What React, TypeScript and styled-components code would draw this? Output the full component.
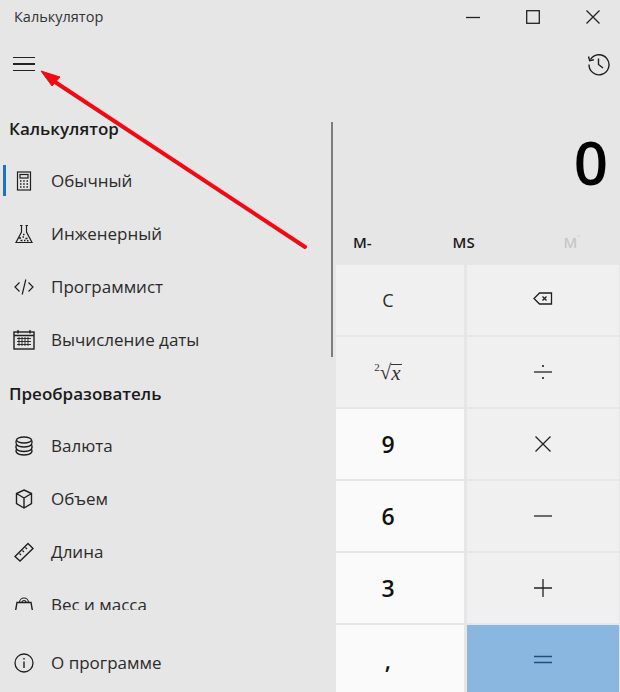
import React from 'react'
import styled, { createGlobalStyle } from 'styled-components'

const GlobalStyle = createGlobalStyle`
  html, body {
    margin: 0;
    padding: 0;
    background: #e6e6e6;
  }
  * {
    box-sizing: border-box;
  }
`

const Icon: React.FC<{ size?: number; box?: number; children: React.ReactNode }> = ({ size = 20, box = 20, children }) => (
  <svg width={size} height={size} viewBox={`0 0 ${box} ${box}`} fill="none" stroke="#1f1f1f" strokeWidth="1.2">
    {children}
  </svg>
)

const CalculatorIcon = () => (
  <Icon>
    <rect x="3.5" y="1" width="13" height="18" />
    <rect x="6" y="3.5" width="8" height="3.5" />
    <path d="M6 10h1.5M9.2 10h1.5M12.5 10h1.5M6 13h1.5M9.2 13h1.5M12.5 13h1.5M6 16h1.5M9.2 16h1.5M12.5 16h1.5" strokeWidth="1.4" />
  </Icon>
)

const FlaskIcon = () => (
  <Icon>
    <path d="M7.5 1v7L2 18.5h16L12.5 8V1M6 1.5h2.5M11.5 1.5H14" />
    <path d="M5 14h2M8.5 13h1.5M11.5 14.5h2M6.5 16.5h2M10 16.5h1.5M13 16.8h1.5M9 10.5h1.5" strokeWidth="1.5" />
  </Icon>
)

const CodeIcon = () => (
  <Icon>
    <path d="M5.5 5.5L1 10l4.5 4.5M14.5 5.5L19 10l-4.5 4.5M11.8 2.5L8.2 17.5" />
  </Icon>
)

const CalendarIcon = () => (
  <Icon box={22} size={22}>
    <rect x="1" y="3" width="20" height="17" strokeWidth="1.4" />
    <path d="M1 6.5h20M5 1v3.5M17 1v3.5" strokeWidth="1.4" />
    <path d="M4 9.5h14M4 12.5h14M4 15.5h14M6 8v9M9 8v9M12 8v9M15 8v9" strokeWidth="0.9" />
  </Icon>
)

const CoinsIcon = () => (
  <Icon>
    <ellipse cx="10" cy="4" rx="7.5" ry="3" strokeWidth="1.4" />
    <path d="M2.5 4c-.8 1.5-.8 3 0 4.5 1.4 1.7 3.9 2.5 7.5 2.5s6.100-.8 7.500-2.500c.8-1.500.8-3 0-4.500M2.500 8.500c-.8 1.500-.8 3 0 4.500 1.400 1.700 3.900 2.500 7.500 2.500s6.100-.8 7.500-2.500c.8-1.500.8-3 0-4.500M2.500 13c-.8 1.500-.8 2.500 0 3.500 1.400 1.700 3.900 2.500 7.500 2.500s6.100-.8 7.500-2.500c.8-1 .8-2 0-3.500" strokeWidth="1.4" />
  </Icon>
)

const CubeIcon = () => (
  <Icon>
    <path d="M10 1l7.5 3.500v10L10 19l-7.500-4.500v-10zM2.500 4.500L10 9l7.500-4.500M10 9v10" strokeWidth="1.4" />
  </Icon>
)

const RulerIcon = () => (
  <Icon>
    <path d="M14 1.500l5 5L6 19 1 14.500z" strokeWidth="1.4" />
    <path d="M5.500 11.500l1.500 1.500M8.500 8.500L10 10M11.500 5.500l1.500 1.500" />
  </Icon>
)

const ScaleIcon = () => (
  <Icon>
    <path d="M1 19l2-11.500h14L19 19" strokeWidth="1.4" />
    <path d="M5.500 7.500a4.500 4.500 0 0 1 9 0M8 7.500a2 2 0 0 1 4 0" strokeWidth="1.2" />
  </Icon>
)

const InfoIcon = () => (
  <Icon>
    <circle cx="10" cy="10" r="9" strokeWidth="1.3" />
    <path d="M10 8.500V15" strokeWidth="1.4" />
    <circle cx="10" cy="5.800" r="0.5" strokeWidth="1" />
  </Icon>
)

const HistoryIcon = () => (
  <Icon box={24} size={24}>
    <path d="M4.500 7.500A10 10 0 1 1 3 12.500" strokeWidth="1.4" />
    <path d="M2.500 4.500l1.200 4.200 4.200-1" strokeWidth="1.4" />
    <path d="M12.500 6.500v6l4.500 3.500" strokeWidth="1.4" />
  </Icon>
)

const BackspaceIcon = () => (
  <Icon box={20} size={20}>
    <path d="M18.500 3H6.500L1 8.500l5.500 5.500h12z" strokeWidth="1.3" />
    <path d="M9.500 6.500l4 4M13.500 6.500l-4 4" strokeWidth="1.3" />
  </Icon>
)

const SymbolIcon: React.FC<{ d: string; dots?: boolean; color?: string }> = ({ d, dots, color = '#222' }) => (
  <svg width="20" height="20" viewBox="0 0 20 20" fill="none" stroke={color} strokeWidth="1.3">
    <path d={d} />
    {dots && (
      <>
        <circle cx="10" cy="4" r="1.1" fill={color} stroke="none" />
        <circle cx="10" cy="16" r="1.1" fill={color} stroke="none" />
      </>
    )}
  </svg>
)

const Window = styled.div`
  position: relative;
  width: 620px;
  height: 692px;
  overflow: hidden;
  display: flex;
  flex-direction: column;
  background: #e6e6e6;
  color: #1a1a1a;
  font-family: "Open Sans", "Noto Sans", sans-serif;
`

const TitleBar = styled.div`
  height: 34px;
  flex: none;
  display: flex;
  align-items: center;
  justify-content: space-between;
  padding: 0 20px 0 14px;
`

const TitleText = styled.span`
  font-size: 14.5px;
  color: #333;
  margin-top: -2px;
`

const WindowControls = styled.div`
  display: flex;
  gap: 46px;
  align-items: center;
`

const TopBar = styled.div`
  height: 60px;
  flex: none;
  display: flex;
  align-items: center;
  justify-content: space-between;
  padding: 0 10px 0 13px;
`

const Hamburger = styled.div`
  width: 22px;
  height: 14px;
  border-top: 1.5px solid #222;
  border-bottom: 1.5px solid #222;
  display: flex;
  align-items: center;

  &::before {
    content: '';
    display: block;
    width: 100%;
    height: 1.5px;
    background: #222;
  }
`

const Body = styled.div`
  flex: 1;
  min-height: 0;
  display: flex;
`

const Sidebar = styled.nav`
  position: relative;
  width: 336px;
  flex: none;
  display: flex;
  flex-direction: column;
`

const NavList = styled.div`
  height: 516px;
  flex: none;
  padding-top: 7px;
  overflow: hidden;
`

const Scrollbar = styled.div`
  position: absolute;
  top: 28px;
  right: 3px;
  width: 2px;
  height: 235px;
  background: #7d7d7d;
`

const SectionTitle = styled.div`
  height: 53px;
  display: flex;
  align-items: center;
  padding: 1px 0 0 9px;
  font-size: 17px;
  font-weight: 600;
  color: #1a1a1a;
`

const NavItem = styled.div<{ $active?: boolean }>`
  position: relative;
  height: 53px;
  display: flex;
  align-items: center;
  padding-left: 13px;
  font-size: 17px;
  color: #2b2b2b;

  &::before {
    content: '';
    display: ${p => (p.$active ? 'block' : 'none')};
    position: absolute;
    left: 3px;
    top: 11px;
    width: 3px;
    height: 31px;
    background: #1a73c8;
  }
`

const NavIcon = styled.span`
  width: 22px;
  height: 22px;
  flex: none;
  margin-right: 16px;
  display: flex;
  align-items: center;
  justify-content: center;
`

const Footer = styled.div`
  flex: 1;
  display: flex;
  flex-direction: column;
  justify-content: flex-end;
  padding-bottom: 3px;
`

const Calculator = styled.section`
  flex: 1;
  min-width: 0;
  display: flex;
  flex-direction: column;
`

const Display = styled.div`
  height: 122px;
  flex: none;
  display: flex;
  align-items: center;
  justify-content: flex-end;
  padding: 14px 12px 0 0;
  font-size: 60px;
  font-weight: 600;
  color: #000;
  line-height: 1;
`

const MemoryRow = styled.div`
  height: 49px;
  flex: none;
  display: flex;
  align-items: center;
  justify-content: space-between;
  padding: 7px 40px 4px 17px;
`

const MemoryButton = styled.span<{ $disabled?: boolean }>`
  font-size: 15px;
  font-weight: 600;
  color: ${p => (p.$disabled ? '#c8c8c8' : '#1a1a1a')};

  &:nth-child(2) {
    margin-right: 8px;
  }

  sup {
    font-size: 9px;
    line-height: 0;
  }
`

const Keypad = styled.div`
  display: grid;
  grid-template-columns: 128px 151.5px;
  grid-auto-rows: 70px;
  column-gap: 3px;
  row-gap: 2px;
`

const Key = styled.div<{ $variant?: 'digit' | 'op' | 'equals' }>`
  display: flex;
  align-items: center;
  justify-content: center;
  background: ${p => (p.$variant === 'digit' ? '#fafafa' : p.$variant === 'equals' ? '#89b7e0' : '#f0f0f0')};
  color: #111;

  &:nth-child(odd) {
    padding-right: 24px;
  }
`

const DigitLabel = styled.span`
  font-size: 23px;
  font-weight: 600;
`

const ClearLabel = styled.span`
  font-size: 18px;
  color: #2a2a2a;
`

const RootLabel = styled.span`
  display: flex;
  align-items: flex-end;
  font-family: "Liberation Serif", serif;
  font-size: 21px;
  line-height: 20px;
  color: #333;

  sup {
    font-size: 11px;
    line-height: 11px;
    align-self: flex-start;
  }

  i {
    display: block;
    line-height: 17px;
    border-top: 1px solid #333;
    padding-right: 1px;
  }
`

const Arrow = styled.svg`
  position: absolute;
  left: 0;
  top: 0;
  pointer-events: none;
`

const topNav = [
  { label: 'Обычный', icon: <CalculatorIcon />, active: true },
  { label: 'Инженерный', icon: <FlaskIcon /> },
  { label: 'Программист', icon: <CodeIcon /> },
  { label: 'Вычисление даты', icon: <CalendarIcon /> },
]

const converters = [
  { label: 'Валюта', icon: <CoinsIcon /> },
  { label: 'Объем', icon: <CubeIcon /> },
  { label: 'Длина', icon: <RulerIcon /> },
  { label: 'Вес и масса', icon: <ScaleIcon /> },
]

const App: React.FC = () => {
  return (
    <Window>
      <GlobalStyle />
      <TitleBar>
        <TitleText>Калькулятор</TitleText>
        <WindowControls>
          <svg width="14" height="14" viewBox="0 0 14 14" fill="none" stroke="#222" strokeWidth="1.3">
            <path d="M0 7.500h14" />
          </svg>
          <svg width="14" height="14" viewBox="0 0 14 14" fill="none" stroke="#222" strokeWidth="1.3">
            <rect x="0.7" y="0.7" width="12.6" height="12.6" />
          </svg>
          <svg width="14" height="14" viewBox="0 0 14 14" fill="none" stroke="#222" strokeWidth="1.3">
            <path d="M0.500 0.500l13 13M13.500 0.500l-13 13" />
          </svg>
        </WindowControls>
      </TitleBar>
      <TopBar>
        <Hamburger />
        <HistoryIcon />
      </TopBar>
      <Body>
        <Sidebar>
          <NavList>
            <SectionTitle>Калькулятор</SectionTitle>
            {topNav.map(item => (
              <NavItem key={item.label} $active={item.active}>
                <NavIcon>{item.icon}</NavIcon>
                {item.label}
              </NavItem>
            ))}
            <SectionTitle>Преобразователь</SectionTitle>
            {converters.map(item => (
              <NavItem key={item.label}>
                <NavIcon>{item.icon}</NavIcon>
                {item.label}
              </NavItem>
            ))}
          </NavList>
          <Scrollbar />
          <Footer>
            <NavItem>
              <NavIcon><InfoIcon /></NavIcon>
              О программе
            </NavItem>
          </Footer>
        </Sidebar>
        <Calculator>
          <Display>0</Display>
          <MemoryRow>
            <MemoryButton>M-</MemoryButton>
            <MemoryButton>MS</MemoryButton>
            <MemoryButton $disabled>M<sup>˅</sup></MemoryButton>
          </MemoryRow>
          <Keypad>
            <Key><ClearLabel>C</ClearLabel></Key>
            <Key><BackspaceIcon /></Key>
            <Key><RootLabel><sup>2</sup>√<i>x</i></RootLabel></Key>
            <Key><SymbolIcon d="M1 10h18" dots /></Key>
            <Key $variant="digit"><DigitLabel>9</DigitLabel></Key>
            <Key><SymbolIcon d="M2.500 2.500l15 15M17.500 2.500l-15 15" /></Key>
            <Key $variant="digit"><DigitLabel>6</DigitLabel></Key>
            <Key><SymbolIcon d="M1 10h18" /></Key>
            <Key $variant="digit"><DigitLabel>3</DigitLabel></Key>
            <Key><SymbolIcon d="M1 10h18M10 1v18" /></Key>
            <Key $variant="digit"><DigitLabel>,</DigitLabel></Key>
            <Key $variant="equals"><SymbolIcon d="M1 6.500h18M1 12.500h18" color="#1d4f7d" /></Key>
          </Keypad>
        </Calculator>
      </Body>
      <Arrow width="620" height="692" viewBox="0 0 620 692">
        <path d="M305 247L52 80" stroke="#f00a14" strokeWidth="4" strokeLinecap="round" />
        <path d="M41 71L60 77L52 86Z" fill="#f00a14" stroke="#f00a14" strokeWidth="1" />
      </Arrow>
    </Window>
  )
}

export default App
